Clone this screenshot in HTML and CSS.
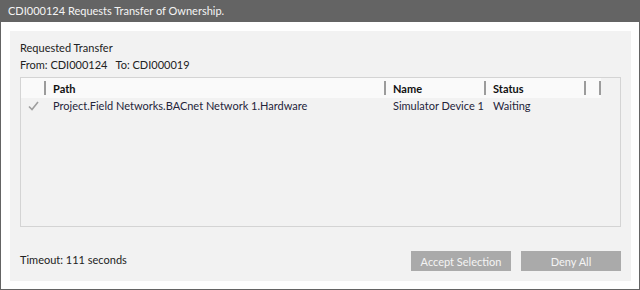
FILE: index.html
```html
<!DOCTYPE html>
<html lang="en">
<head>
  <meta charset="UTF-8" />
  <title>Transfer of Ownership</title>
  <link rel="stylesheet" href="styles.css">
</head>
<body>
  <div class="dialog">
    <div class="title-bar">CDI000124 Requests Transfer of Ownership.</div>
    <div class="dialog-body">
      <div class="panel">
        <div class="line">Requested Transfer</div>
        <div class="line">From: CDI000124&nbsp;&nbsp; To: CDI000019</div>

        <div class="grid">
          <div class="grid-head">
            <div class="col col-check"></div>
            <div class="col col-path"><span class="grip"></span><span class="head-label">Path</span></div>
            <div class="col col-name"><span class="grip"></span><span class="head-label">Name</span></div>
            <div class="col col-status"><span class="grip"></span><span class="head-label">Status</span></div>
            <div class="col col-extra"><span class="grip"></span></div>
            <div class="col col-end"><span class="grip"></span></div>
          </div>
          <div class="grid-row">
            <div class="col col-check">
              <svg width="11" height="10" viewBox="0 0 11 10"><polyline points="1,5.5 4,8.5 10,1" fill="none" stroke="#9e9e9e" stroke-width="1.6"/></svg>
            </div>
            <div class="col col-path"><span class="cell">Project.Field Networks.BACnet Network 1.Hardware</span></div>
            <div class="col col-name"><span class="cell">Simulator Device 1</span></div>
            <div class="col col-status"><span class="cell">Waiting</span></div>
          </div>
        </div>

        <div class="footer">
          <div class="timeout">Timeout: 111 seconds</div>
          <button class="btn">Accept Selection</button>
          <button class="btn">Deny All</button>
        </div>
      </div>
    </div>
  </div>
</body>
</html>
```

FILE: styles.css
```css
* {
  box-sizing: border-box;
}
body {
  margin: 0;
  font-family: Lato, "Noto Sans", sans-serif;
  font-size: 11px;
  color: #222;
  background: #fff;
}
.dialog {
  width: 640px;
  height: 290px;
  border: 1px solid #646464;
  border-top: none;
  background: #fff;
}
.title-bar {
  height: 22px;
  margin: 0 -1px;
  background: #646464;
  color: #f4f4f4;
  line-height: 22px;
  padding-left: 8px;
}
.dialog-body {
  padding: 9px 8px 8px 9px;
}
.panel {
  height: 250px;
  background: #f2f2f2;
  padding: 8px 10px 10px 10px;
  display: flex;
  flex-direction: column;
}
.line {
  line-height: 17px;
}
.grid {
  margin-top: 4px;
  height: 150px;
  border: 1px solid #d4d4d4;
}
.grid-head {
  display: flex;
  width: 580px;
  height: 20px;
  background: #fafafa;
  font-weight: bold;
  color: #111;
}
.grid-row {
  display: flex;
  height: 16px;
  line-height: 16px;
}
.col {
  display: flex;
  align-items: center;
  overflow: hidden;
  white-space: nowrap;
}
.col-check {
  width: 23px;
  justify-content: center;
  padding-left: 1px;
}
.col-path {
  width: 340px;
}
.col-name {
  width: 100px;
}
.col-status {
  width: 100px;
}
.col-extra {
  width: 15px;
}
.col-end {
  width: 2px;
}
.grip {
  flex: none;
  width: 2px;
  height: 14px;
  background: #9c9c9c;
}
.head-label {
  margin-left: 7px;
}
.cell {
  margin-left: 9px;
  color: #24243a;
}
.footer {
  margin-top: auto;
  display: flex;
  align-items: flex-start;
  gap: 10px;
}
.timeout {
  flex: 1;
  line-height: 18px;
}
.btn {
  width: 100px;
  height: 20px;
  border: none;
  background: #aaaaaa;
  color: #f4f4f4;
  font-family: inherit;
  font-size: 11px;
  padding: 0;
}
```
